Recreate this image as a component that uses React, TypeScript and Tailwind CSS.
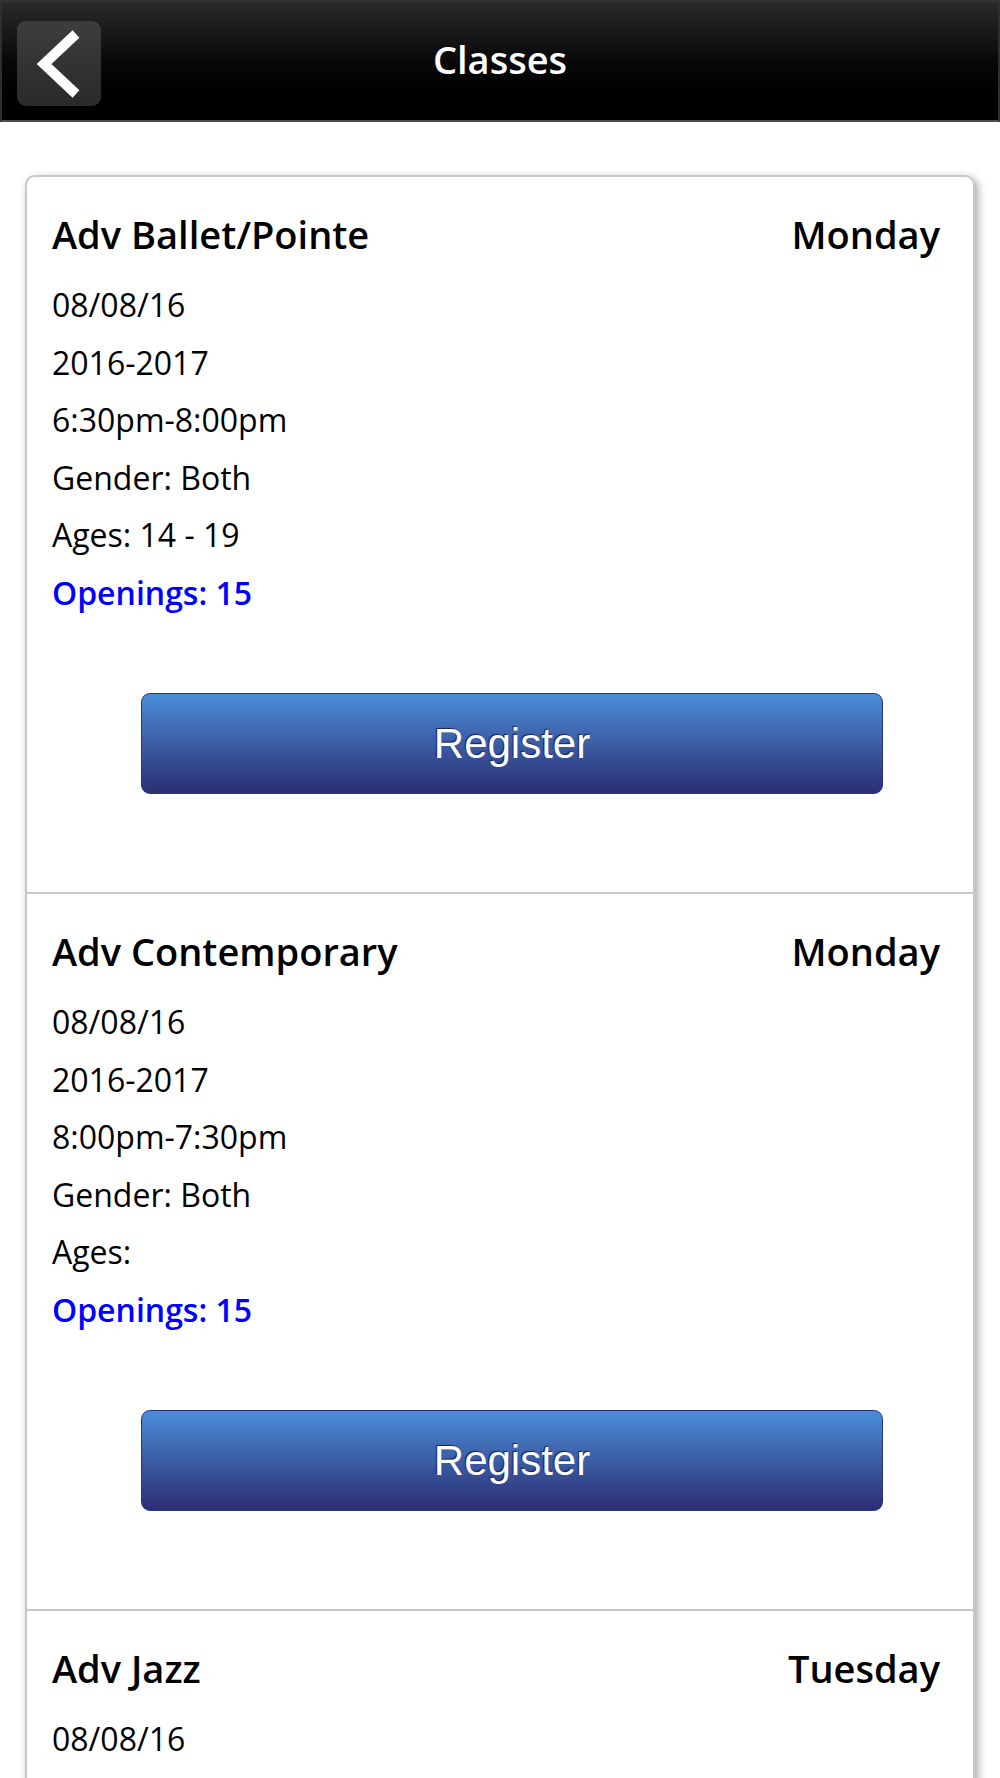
import React from 'react';

type ClassItem = {
  name: string;
  day: string;
  date: string;
  season: string;
  time: string;
  gender: string;
  ages: string;
  openings: number;
};

const CLASSES: ClassItem[] = [
  {
    name: 'Adv Ballet/Pointe',
    day: 'Monday',
    date: '08/08/16',
    season: '2016-2017',
    time: '6:30pm-8:00pm',
    gender: 'Both',
    ages: '14 - 19',
    openings: 15,
  },
  {
    name: 'Adv Contemporary',
    day: 'Monday',
    date: '08/08/16',
    season: '2016-2017',
    time: '8:00pm-7:30pm',
    gender: 'Both',
    ages: '',
    openings: 15,
  },
  {
    name: 'Adv Jazz',
    day: 'Tuesday',
    date: '08/08/16',
    season: '2016-2017',
    time: '6:30pm-8:00pm',
    gender: 'Both',
    ages: '14 - 19',
    openings: 15,
  },
];

const BackButton: React.FC = () => (
  <button
    type="button"
    aria-label="Back"
    className="absolute left-[15px] top-[19px] h-[85px] w-[84px] rounded-[9px] bg-gradient-to-b from-[#3e3d3d] to-[#2b2a2a]"
  >
    <svg viewBox="0 0 84 85" className="h-full w-full" fill="none">
      <path
        d="M59 13 L27 43 L59 73"
        stroke="#ffffff"
        strokeWidth={10}
        strokeLinecap="butt"
        strokeLinejoin="miter"
      />
    </svg>
  </button>
);

const ClassSection: React.FC<{ item: ClassItem }> = ({ item }) => (
  <div className="border-b-2 border-[#c8c8c8] pl-[25px] pr-[33px] pt-[31px] pb-[98px]">
    <div className="flex items-start justify-between text-[38px] font-semibold leading-[52px] text-black">
      <span>{item.name}</span>
      <span>{item.day}</span>
    </div>
    <div className="mt-[16px] text-[32px] leading-[57.5px] text-black">
      <div>{item.date}</div>
      <div>{item.season}</div>
      <div>{item.time}</div>
      <div>Gender: {item.gender}</div>
      <div>Ages: {item.ages}</div>
      <div className="font-semibold text-[#0000ff]">Openings: {item.openings}</div>
    </div>
    <button
      type="button"
      className="mt-[72px] ml-[89px] mr-[57px] flex h-[101px] w-[742px] items-center justify-center rounded-[9px] border border-[#28347e] bg-gradient-to-b from-[#4a8ed8] to-[#2b2e73] text-[42px] text-white [font-family:'Liberation_Sans',Arial,sans-serif] [text-shadow:-1px_-1px_1px_rgba(15,25,80,0.9)]"
    >
      Register
    </button>
  </div>
);

const App: React.FC = () => {
  return (
    <div className="min-h-screen w-full bg-white [font-family:'Open_Sans',sans-serif]">
      {/* HEADER */}
      <header className="relative flex h-[122px] items-center justify-center border-x-2 border-t-2 border-b-2 border-x-[#2e2e2e] border-t-[#333333] border-b-[#4d4d4d] bg-gradient-to-b from-[#2a2a2a] to-[#000000]">
        <BackButton />
        <h1 className="-mt-[3px] text-[38px] font-semibold text-white">Classes</h1>
      </header>

      <div className="px-[25px] pt-[53px]">
        <div className="overflow-hidden rounded-[10px] border-2 border-[#c8c8c8] bg-white shadow-[3px_3px_9px_rgba(0,0,0,0.35)]">
          {CLASSES.map((item) => (
            <ClassSection key={item.name} item={item} />
          ))}
        </div>
      </div>
    </div>
  );
};

export default App;
